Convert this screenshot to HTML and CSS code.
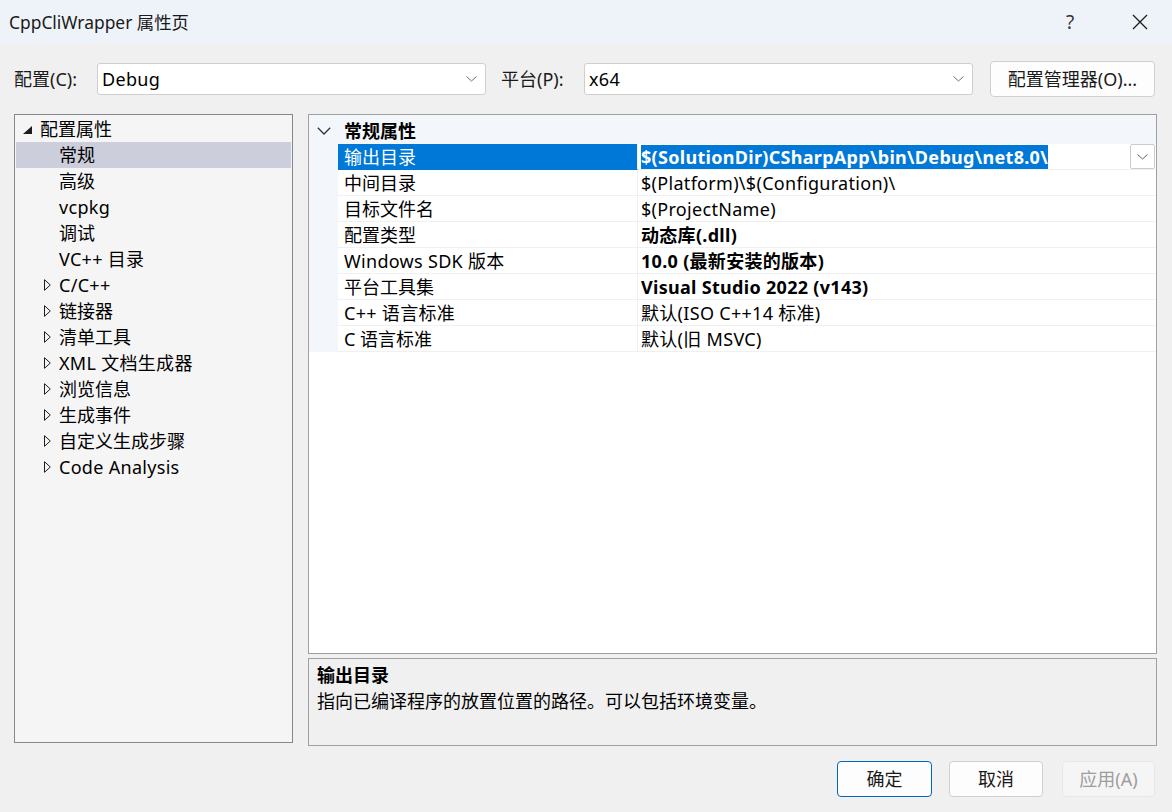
FILE: index.html
```html
<!DOCTYPE html>
<html lang="zh-CN">
<head>
<meta charset="utf-8">
<title>CppCliWrapper 属性页</title>
<link rel="stylesheet" href="styles.css">
</head>
<body>
<div class="window">
  <header class="titlebar">
    <span class="title">CppCliWrapper 属性页</span>
    <div class="title-actions">
      <span class="cap help">?</span>
      <span class="cap close">
        <svg width="16" height="16" viewBox="0 0 16 16"><path d="M1 1 L15 15 M15 1 L1 15" stroke="#1b1b1b" stroke-width="1.3" fill="none"/></svg>
      </span>
    </div>
  </header>

  <div class="toolbar">
    <span class="field-label">配置(C):</span>
    <div class="select">
      <span class="select-text lat">Debug</span>
      <svg class="chev" width="11" height="6" viewBox="0 0 11 6"><path d="M0.5 0.5 L5.5 5 L10.5 0.5" stroke="#707070" stroke-width="1" fill="none"/></svg>
    </div>
    <span class="field-label second">平台(P):</span>
    <div class="select">
      <span class="select-text lat">x64</span>
      <svg class="chev" width="11" height="6" viewBox="0 0 11 6"><path d="M0.5 0.5 L5.5 5 L10.5 0.5" stroke="#707070" stroke-width="1" fill="none"/></svg>
    </div>
    <button class="btn manager">配置管理器(O)...</button>
  </div>

  <div class="main">
    <nav class="tree">
      <div class="tree-row root">
        <svg class="tri-exp" width="9" height="8" viewBox="0 0 9 8"><path d="M9 0 L9 8 L0 8 Z" fill="#1e1e1e"/></svg>
        <span>配置属性</span>
      </div>
      <div class="tree-row leaf selected"><span>常规</span></div>
      <div class="tree-row leaf"><span>高级</span></div>
      <div class="tree-row leaf"><span class="lat">vcpkg</span></div>
      <div class="tree-row leaf"><span>调试</span></div>
      <div class="tree-row leaf"><span class="lat">VC++ 目录</span></div>
      <div class="tree-row node"><svg class="tri" width="7" height="12" viewBox="0 0 7 12"><path d="M0.5 0.7 L6.3 6 L0.5 11.3 Z" fill="none" stroke="#1e1e1e" stroke-width="1"/></svg><span class="lat">C/C++</span></div>
      <div class="tree-row node"><svg class="tri" width="7" height="12" viewBox="0 0 7 12"><path d="M0.5 0.7 L6.3 6 L0.5 11.3 Z" fill="none" stroke="#1e1e1e" stroke-width="1"/></svg><span>链接器</span></div>
      <div class="tree-row node"><svg class="tri" width="7" height="12" viewBox="0 0 7 12"><path d="M0.5 0.7 L6.3 6 L0.5 11.3 Z" fill="none" stroke="#1e1e1e" stroke-width="1"/></svg><span>清单工具</span></div>
      <div class="tree-row node"><svg class="tri" width="7" height="12" viewBox="0 0 7 12"><path d="M0.5 0.7 L6.3 6 L0.5 11.3 Z" fill="none" stroke="#1e1e1e" stroke-width="1"/></svg><span class="lat">XML 文档生成器</span></div>
      <div class="tree-row node"><svg class="tri" width="7" height="12" viewBox="0 0 7 12"><path d="M0.5 0.7 L6.3 6 L0.5 11.3 Z" fill="none" stroke="#1e1e1e" stroke-width="1"/></svg><span>浏览信息</span></div>
      <div class="tree-row node"><svg class="tri" width="7" height="12" viewBox="0 0 7 12"><path d="M0.5 0.7 L6.3 6 L0.5 11.3 Z" fill="none" stroke="#1e1e1e" stroke-width="1"/></svg><span>生成事件</span></div>
      <div class="tree-row node"><svg class="tri" width="7" height="12" viewBox="0 0 7 12"><path d="M0.5 0.7 L6.3 6 L0.5 11.3 Z" fill="none" stroke="#1e1e1e" stroke-width="1"/></svg><span>自定义生成步骤</span></div>
      <div class="tree-row node"><svg class="tri" width="7" height="12" viewBox="0 0 7 12"><path d="M0.5 0.7 L6.3 6 L0.5 11.3 Z" fill="none" stroke="#1e1e1e" stroke-width="1"/></svg><span class="lat">Code Analysis</span></div>
    </nav>

    <div class="right">
      <div class="grid">
        <div class="grid-header">
          <span class="gutter">
            <svg width="14" height="8" viewBox="0 0 14 8"><path d="M0.8 0.8 L7 7 L13.2 0.8" stroke="#333" stroke-width="1.3" fill="none"/></svg>
          </span>
          <span class="cat">常规属性</span>
        </div>
        <div class="prop selected">
          <span class="gutter"></span>
          <span class="name">输出目录</span>
          <span class="value">
            <span class="hl">$(SolutionDir)CSharpApp\bin\Debug\net8.0\</span>
            <span class="dd"><svg width="11" height="6" viewBox="0 0 11 6"><path d="M0.5 0.5 L5.5 5 L10.5 0.5" stroke="#606060" stroke-width="1" fill="none"/></svg></span>
          </span>
        </div>
        <div class="prop"><span class="gutter"></span><span class="name">中间目录</span><span class="value">$(Platform)\$(Configuration)\</span></div>
        <div class="prop"><span class="gutter"></span><span class="name">目标文件名</span><span class="value">$(ProjectName)</span></div>
        <div class="prop"><span class="gutter"></span><span class="name">配置类型</span><span class="value bold">动态库(.dll)</span></div>
        <div class="prop"><span class="gutter"></span><span class="name lat">Windows SDK 版本</span><span class="value bold">10.0 (最新安装的版本)</span></div>
        <div class="prop"><span class="gutter"></span><span class="name">平台工具集</span><span class="value bold">Visual Studio 2022 (v143)</span></div>
        <div class="prop"><span class="gutter"></span><span class="name lat">C++ 语言标准</span><span class="value">默认(ISO C++14 标准)</span></div>
        <div class="prop"><span class="gutter"></span><span class="name">C 语言标准</span><span class="value">默认(旧 MSVC)</span></div>
      </div>
      <div class="desc">
        <div class="desc-title">输出目录</div>
        <div class="desc-text">指向已编译程序的放置位置的路径。可以包括环境变量。</div>
      </div>
    </div>
  </div>

  <div class="footer">
    <button class="btn ok">确定</button>
    <button class="btn cancel">取消</button>
    <button class="btn apply">应用(A)</button>
  </div>
</div>
</body>
</html>
```

FILE: styles.css
```css
* { box-sizing: border-box; }

html, body {
  margin: 0;
  padding: 0;
}

body {
  background: #f0f0f0;
  font-family: "Noto Sans", "Noto Sans CJK SC", sans-serif;
  font-size: 18px;
  color: #000;
}

.lat { letter-spacing: 0.3px; }

.window {
  width: 1172px;
  height: 812px;
  display: flex;
  flex-direction: column;
  overflow: hidden;
}

/* Title bar */
.titlebar {
  height: 43px;
  flex: none;
  display: flex;
  align-items: center;
  background: #eef3f9;
  padding-left: 9px;
}

.title {
  color: #1a1a1a;
  font-size: 17.4px;
  line-height: 24px;
}

.title-actions {
  margin-left: auto;
  display: flex;
  gap: 8px;
  height: 100%;
}

.cap {
  display: flex;
  align-items: center;
  justify-content: center;
  color: #333;
}

.cap.help { width: 60px; font-size: 19px; }
.cap.close { width: 64px; }

/* Toolbar */
.toolbar {
  height: 71px;
  flex: none;
  display: flex;
  align-items: center;
  padding-left: 14px;
}

.field-label {
  width: 83px;
  line-height: 24px;
  color: #1a1a1a;
}

.field-label.second { margin-left: 15px; }

.select {
  width: 389px;
  height: 32px;
  background: #fff;
  border: 1px solid #cfcfcf;
  border-radius: 3px;
  display: flex;
  align-items: center;
  padding: 0 8px 0 4px;
}

.select-text {
  flex: 1;
  line-height: 24px;
}

.btn {
  font: inherit;
  height: 36px;
  background: #fdfdfd;
  border: 1px solid #d0d0d0;
  border-radius: 4px;
  color: #1a1a1a;
  padding: 0;
  line-height: 24px;
}

.btn.manager {
  margin-left: 17px;
  width: 165px;
}

/* Main area */
.main {
  height: 632px;
  flex: none;
  display: flex;
  align-items: flex-start;
  padding-left: 14px;
  gap: 15px;
}

.tree {
  width: 279px;
  height: 629px;
  border: 1px solid #828790;
  background: #f5f5f5;
  padding: 1px;
}

.tree-row {
  height: 26px;
  display: flex;
  align-items: center;
  line-height: 26px;
  white-space: nowrap;
}

.tree-row.root { padding-left: 7px; gap: 8px; }
.tree-row.leaf { padding-left: 43px; }
.tree-row.node { padding-left: 28px; gap: 8px; }
.tree-row.selected { background: #cccedb; }

.tri-exp { margin-top: 1px; }

.right {
  width: 849px;
  display: flex;
  flex-direction: column;
  gap: 4px;
}

/* Property grid */
.grid {
  height: 540px;
  border: 1px solid #a0a0a0;
  background: #fff;
}

.grid-header {
  height: 29px;
  display: flex;
  align-items: center;
  background: #f3f6fb;
  padding-top: 3px;
}

.gutter {
  width: 29px;
  flex: none;
  display: flex;
  align-items: center;
  justify-content: center;
  align-self: stretch;
}

.cat {
  font-weight: bold;
  padding-left: 6px;
  line-height: 26px;
}

.prop {
  height: 26px;
  display: flex;
  line-height: 26px;
  white-space: nowrap;
}

.prop .gutter { background: #f3f6fb; }

.prop .name {
  width: 300px;
  flex: none;
  padding-left: 6px;
  border-right: 1px solid #f0f0f0;
  border-bottom: 1px solid #f0f0f0;
}

.prop .value {
  flex: 1;
  display: flex;
  align-items: center;
  padding-left: 3px;
  border-bottom: 1px solid #f0f0f0;
  letter-spacing: 0.3px;
}

.prop .value.bold { font-weight: bold; }

.prop.selected .name {
  background: #0078d7;
  color: #fff;
  border-bottom-color: #0078d7;
}

.hl {
  background: #0078d7;
  color: #fff;
  font-weight: bold;
  line-height: 24px;
}

.dd {
  margin-left: auto;
  margin-right: 1px;
  width: 25px;
  height: 25px;
  border: 1px solid #cccccc;
  border-radius: 2px;
  background: #fff;
  display: flex;
  align-items: center;
  justify-content: center;
}

/* Description */
.desc {
  height: 88px;
  border: 1px solid #a0a0a0;
  background: #f0f0f0;
  padding: 3px 8px;
}

.desc-title {
  font-weight: bold;
  line-height: 26px;
}

.desc-text {
  line-height: 26px;
}

/* Footer */
.footer {
  flex: none;
  display: flex;
  justify-content: flex-end;
  padding: 15px 17px 0 0;
}

.btn.ok {
  width: 95px;
  border-color: #0067c0;
  background: #fdfdfd;
}

.btn.cancel {
  width: 94px;
  margin-left: 17px;
}

.btn.apply {
  width: 93px;
  margin-left: 19px;
  background: #f5f5f5;
  border-color: #e8e8e8;
  color: #9d9d9d;
}
```
